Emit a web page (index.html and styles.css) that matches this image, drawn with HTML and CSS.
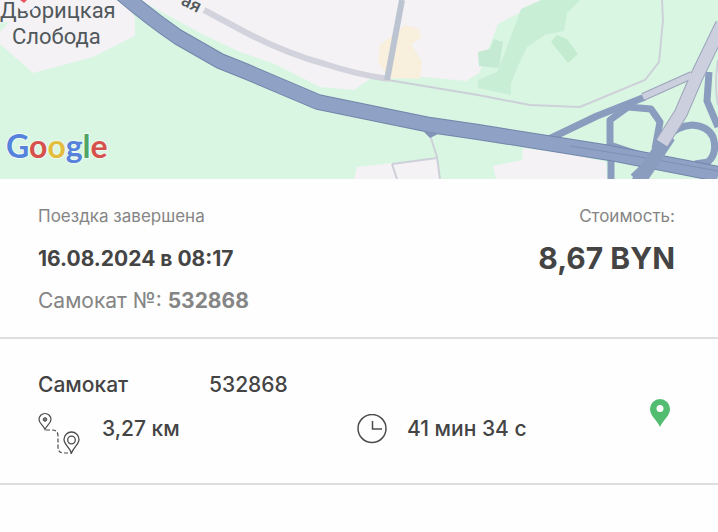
FILE: index.html
```
<!DOCTYPE html>
<html lang="ru">
<head>
    <meta charset="UTF-8">
    <meta name="viewport" content="width=device-width, initial-scale=1.0">
    <title>Поездка завершена</title>
    <link rel="stylesheet" href="styles.css">
</head>
<body>
    <svg class="map" viewBox="0 0 718 179" role="img" aria-label="Карта поездки">
        <rect width="718" height="179" fill="#d9f6e3"/>
        <!-- built-up areas -->
        <path fill="#f4f2f5" d="M0 0H125L135 18V36L93 57L33 73L0 44Z"/>
        <path fill="#d9f6e3" d="M0 23L9 22L0 32Z"/>
        <path fill="#f4f2f5" d="M140 0L200 33L240 52L275 64L320 87L354 90L370 79L388 79L423 77L466 81L479 73L488 50L498 24L543 0Z"/>
        <path fill="#f4f2f5" d="M357 167L392 163L437 158L440 179H354Z"/>
        <path fill="#f4f2f5" d="M523 148L570 154L606 162L607 179H496L493 166L522 160Z"/>
        <path fill="#f8efdc" d="M378 62L380 45L405 25L419 29L421 38L411 44L422 62L420 79L389 78Z"/>
        <!-- woods -->
        <path fill="#c9eed6" d="M541 0H580L567 13L564 31L545 35L527 47L518 66L511 83V95L478 88V80L497 72L504 55L517 20L521 9Z"/>
        <path fill="#c5ead3" d="M478 52L490 49L494 39L503 42L499 68L479 66Z"/>
        <path fill="#c2ebd0" d="M551 42L557 35L567 39L578 54L568 63Z"/>
        <!-- paths -->
        <g fill="none" stroke="#cdd0d8" stroke-width="2">
            <path d="M388 80L478 95L530 105L580 107L645 80L659 62L663 20L662 0"/>
            <path d="M430 135L437 157L440 179M392 164L437 158M392 164L397 179"/>
            <path d="M718 60Q714 85 718 105"/>
        </g>
        <g fill="none" stroke-linejoin="round">
            <path stroke="#d3d3dd" stroke-width="6" d="M204 10L245 32Q285 53 325 64Q355 74 388 79"/>
            <path stroke="#bcc4d1" stroke-width="6" d="M402 0L387 80"/>
        </g>
        <!-- junction ramps -->
        <g fill="none" stroke="#8b9dbf" stroke-width="7" stroke-linejoin="round">
            <path d="M549 139L597 116L645 97"/>
            <path d="M649 158L610 145V120L628 107L651 109L660 122L655 149"/>
            <path d="M709 72L707 101L718 127M664 139Q677 126 692 125Q708 126 713 137Q718 153 708 162L695 164"/>
            <path d="M611 160V179M633 177L647 164L670 163L695 172"/>
        </g>
        <path fill="none" stroke="#7186aa" stroke-width="16" stroke-linejoin="round" d="M122 -6Q150 18 178 37L220 61L245 71L318 102L430 125L478 132L610 153L718 174"/>
        <path fill="none" stroke="#8fa1c5" stroke-width="14" stroke-linejoin="round" d="M122 -6Q150 18 178 37L220 61L245 71L318 102L430 125L478 132L610 153L718 174"/>
        <path fill="none" stroke="#7e91b4" d="M570 146L640 157L718 171"/>
        <path fill="#8194b7" d="M423 131L440 133L430 138Z"/>
        <path fill="none" stroke="#8b9dbf" stroke-width="14" d="M637 184L669 136"/>
        <path fill="none" stroke="#9da4ba" stroke-width="14" d="M662 143L681 113L696 78L722 24"/>
        <path fill="none" stroke="#9da4ba" stroke-width="8" d="M643 97L692 75"/>
        <path fill="none" stroke="#cbcfde" stroke-width="12" d="M662 143L681 113L696 78L722 24"/>
        <path fill="none" stroke="#cbcfde" stroke-width="6" d="M643 97L692 75"/>
        <text class="map-label" x="0" y="18">Дворицкая</text>
        <text class="map-label" x="12" y="44">Слобода</text>
        <circle cx="26" cy="0" r="11" fill="#f4f2f5"/>
        <path fill="#e9555f" d="M20 0H27L24 3Z"/>
        <text class="map-street" transform="translate(180 4) rotate(27)">ая</text>
        <text class="map-logo" x="6" y="158"><tspan fill="#5583dc">G</tspan><tspan fill="#d6514b">o</tspan><tspan fill="#e3be3e">o</tspan><tspan fill="#5583dc">g</tspan><tspan fill="#4fa565">l</tspan><tspan fill="#d6514b">e</tspan></text>
    </svg>
    <main>
        <section class="summary">
            <div>
                <p class="caption">Поездка завершена</p>
                <h1 class="date">16.08.2024 в 08:17</h1>
                <p class="number">Самокат №: <b>532868</b></p>
            </div>
            <div class="cost">
                <p class="caption">Стоимость:</p>
                <p class="price">8,67 BYN</p>
            </div>
        </section>
        <section class="ride">
            <div class="ride-info">
                <div class="ride-name">
                    <span>Самокат</span>
                    <span>532868</span>
                </div>
                <div class="ride-stats">
                    <div class="stat">
                        <svg width="44" height="50" viewBox="0 -8 44 50" fill="none" stroke="#4c4c4c">
                            <path d="M7 17.500C5 13 1 11 1 7.500A6 6 0 0 1 13 7.500C13 11 9 13 7 17.500Z" stroke-width="1.200"/>
                            <circle cx="7" cy="7.500" r="1.800" fill="#777"/>
                            <path d="M33.500 41C31 35 26 32 26 27.500A7.500 7.500 0 0 1 41 27.500C41 32 36 35 33.500 41Z" stroke-width="1.300"/>
                            <circle cx="33.500" cy="28" r="3.800" stroke-width="1.300"/>
                            <path d="M8 18H14Q20 18 20 24V35Q20 41 26 41H33" stroke-width="1.200" stroke-dasharray="4 2"/>
                        </svg>
                        <span>3,27 км</span>
                    </div>
                    <div class="stat">
                        <svg width="30" height="30" viewBox="0 0 30 30" fill="none" stroke="#4c4c4c" stroke-width="1.500">
                            <circle cx="15" cy="14.500" r="14"/>
                            <path d="M15.500 7V15H25"/>
                        </svg>
                        <span>41 мин 34 с</span>
                    </div>
                </div>
            </div>
            <svg class="pin" width="20" height="28" viewBox="0 0 20 28">
                <path fill="#52bd70" fill-rule="evenodd" d="M10 28C7 21 0 17 0 10A10 10 0 0 1 20 10C20 17 13 21 10 28ZM10 6A3.500 3.500 0 1 0 10 13A3.500 3.500 0 1 0 10 6Z"/>
            </svg>
        </section>
    </main>
</body>
</html>
```
FILE: styles.css
```
body {
    margin: 0;
    background-color: #fefefe;
    color: #444;
    font-family: Inter, "Liberation Sans", sans-serif;
    font-size: 21px;
    line-height: 28px;
}
p, h1 {
    margin: 0;
}
.map {
    display: block;
    width: 100%;
}
.map-label {
    font-family: Roboto, sans-serif;
    font-size: 22px;
    fill: #51585b;
}
.map-street {
    font-family: Roboto, sans-serif;
    font-size: 18px;
    font-weight: 500;
    fill: #51585b;
}
.map-logo {
    font-family: Lato, sans-serif;
    font-size: 32px;
    font-weight: bold;
    stroke: #eefaf2;
    stroke-width: 2px;
    paint-order: stroke;
}
.summary {
    display: flex;
    justify-content: space-between;
    padding: 23px 43px 22px 38px;
    border-bottom: 2px solid #dedede;
}
.caption {
    font-size: 17px;
    color: #858585;
}
.date {
    margin: 15px 0 14px;
    font-size: 21px;
    font-weight: bold;
}
.number {
    color: #858585;
}
.cost {
    text-align: right;
}
.price {
    margin-top: 14px;
    font-size: 30px;
    font-weight: bold;
}
.ride {
    display: flex;
    justify-content: space-between;
    align-items: center;
    padding: 32px 48px 29px 38px;
    border-bottom: 2px solid #dedede;
    font-weight: 500;
}
.ride-name, .ride-stats {
    display: grid;
    grid-template-columns: 171px auto;
}
.ride-stats {
    grid-template-columns: 319px auto;
    align-items: center;
    margin-top: 5px;
}
.stat {
    display: flex;
    align-items: center;
    gap: 20px;
}
```
